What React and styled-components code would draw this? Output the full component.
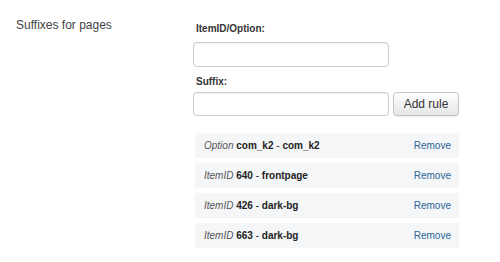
import React from "react";
import styled, { createGlobalStyle } from "styled-components";

const GlobalStyle = createGlobalStyle`
  body {
    margin: 0;
    background: #fff;
    font-family: "Liberation Sans", Arial, sans-serif;
  }
`;

const rules = [
  { type: "Option", key: "com_k2", suffix: "com_k2" },
  { type: "ItemID", key: "640", suffix: "frontpage" },
  { type: "ItemID", key: "426", suffix: "dark-bg" },
  { type: "ItemID", key: "663", suffix: "dark-bg" },
];

const App = () => {
  return (
    <>
      <GlobalStyle />
      <Page>
        <SectionLabel>Suffixes for pages</SectionLabel>
        <Form>
          <FieldLabel>ItemID/Option:</FieldLabel>
          <Input type="text" />
          <FieldLabel $spaced>Suffix:</FieldLabel>
          <InputRow>
            <Input type="text" />
            <Button>Add rule</Button>
          </InputRow>
          <List>
            {rules.map((rule) => (
              <Row key={rule.type + rule.key}>
                <span>
                  <Type>{rule.type}</Type> <b>{rule.key}</b> - <b>{rule.suffix}</b>
                </span>
                <RemoveLink href="#">Remove</RemoveLink>
              </Row>
            ))}
          </List>
        </Form>
      </Page>
    </>
  );
};

export default App;

const Page = styled.div`
  display: flex;
  width: 500px;
  height: 262px;
`;

const SectionLabel = styled.div`
  width: 177px;
  padding: 17px 0 0 16px;
  font-size: 12px;
  line-height: 16px;
  color: #444;
`;

const Form = styled.div`
  display: flex;
  flex-direction: column;
  padding-top: 22px;
  width: 268px;
`;

const FieldLabel = styled.label`
  font-size: 10px;
  line-height: 14px;
  font-weight: bold;
  color: #333;
  padding-left: 3px;
  margin: ${(p) => (p.$spaced ? "8px 0 3px" : "0 0 6px")};
`;

const InputRow = styled.div`
  display: flex;
  gap: 4px;
  height: 24px;
`;

const Input = styled.input`
  box-sizing: border-box;
  width: 196px;
  height: 25px;
  border: 1px solid #ccc;
  border-radius: 4px;
  background: #fff;
  box-shadow: inset 0 1px 1px rgba(0, 0, 0, 0.06);
  padding: 0 6px;
  outline: none;

  ${InputRow} & {
    height: 24px;
  }
`;

const Button = styled.button`
  box-sizing: border-box;
  width: 66px;
  height: 24px;
  border: 1px solid #c4c4c4;
  border-radius: 4px;
  background: linear-gradient(#ffffff, #e6e6e6);
  box-shadow: 0 1px 1px rgba(0, 0, 0, 0.08);
  font-family: "Liberation Sans", Arial, sans-serif;
  font-size: 12px;
  color: #333;
  padding: 0;
`;

const List = styled.div`
  display: flex;
  flex-direction: column;
  gap: 5px;
  margin: 17px 0 0 2px;
`;

const Row = styled.div`
  display: flex;
  align-items: center;
  justify-content: space-between;
  box-sizing: border-box;
  width: 264px;
  height: 25px;
  padding: 0 8px 0 9px;
  background: #f4f6f8;
  font-size: 10px;
  color: #222;

  b {
    font-weight: bold;
  }
`;

const Type = styled.i`
  color: #555;
`;

const RemoveLink = styled.a`
  color: #2a6496;
  text-decoration: none;
  font-size: 10px;
`;
